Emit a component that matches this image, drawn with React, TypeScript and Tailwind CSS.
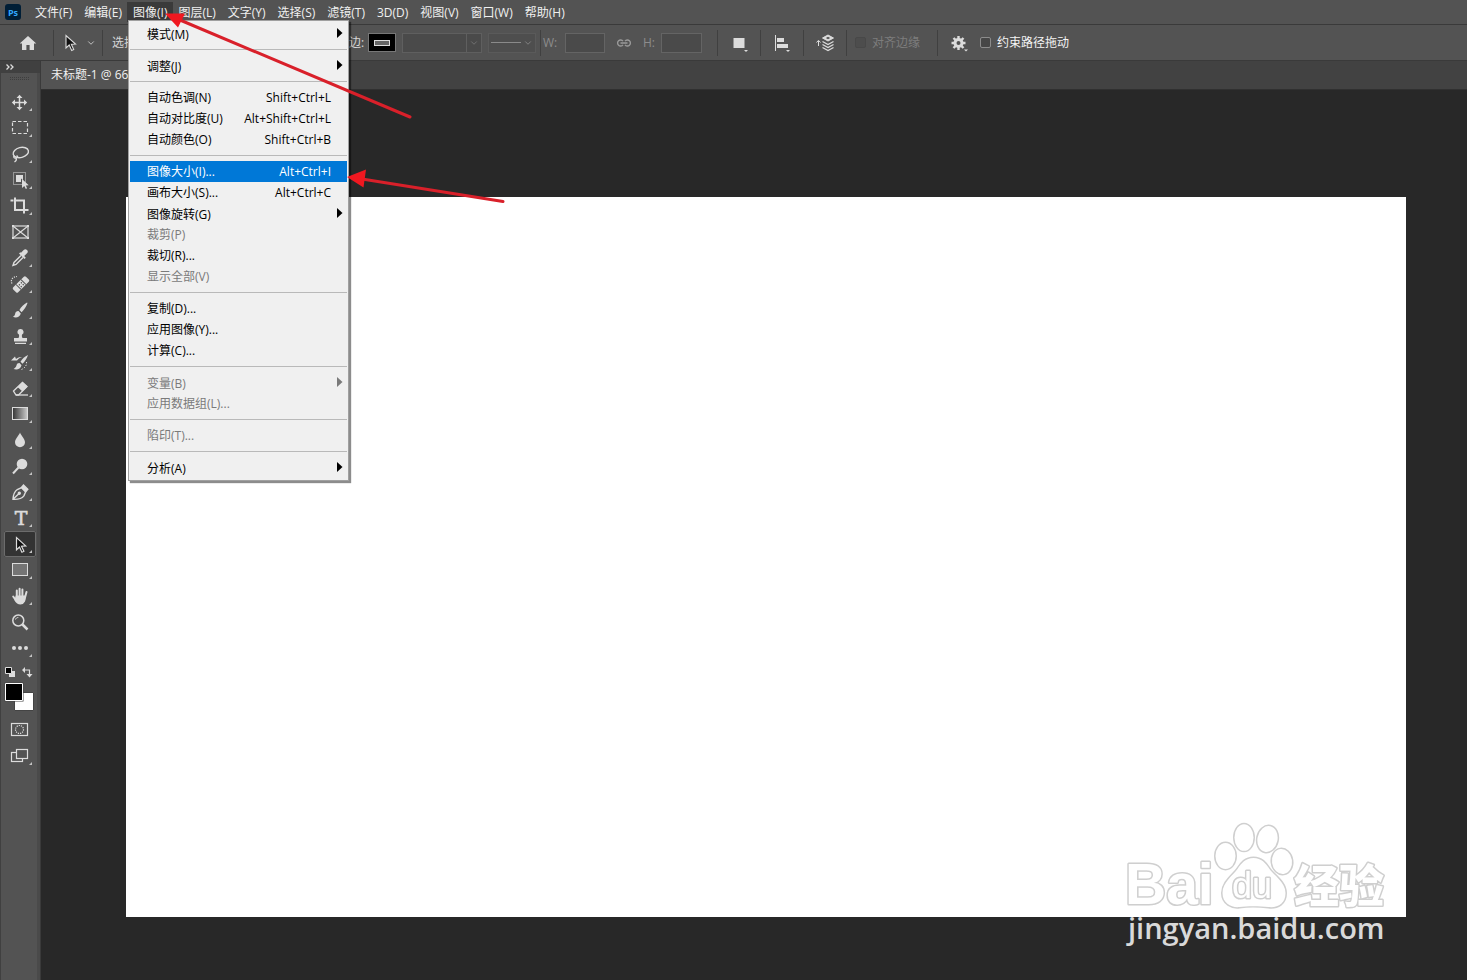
import React from "react";
import { ChevronDown } from "lucide-react";

type MenuEntry = { label: string; keys?: string; sub?: boolean; off?: boolean; active?: boolean };

const imageMenu: MenuEntry[][] = [
  [{ label: "模式(M)", sub: true }],
  [{ label: "调整(J)", sub: true }],
  [
    { label: "自动色调(N)", keys: "Shift+Ctrl+L" },
    { label: "自动对比度(U)", keys: "Alt+Shift+Ctrl+L" },
    { label: "自动颜色(O)", keys: "Shift+Ctrl+B" },
  ],
  [
    { label: "图像大小(I)...", keys: "Alt+Ctrl+I", active: true },
    { label: "画布大小(S)...", keys: "Alt+Ctrl+C" },
    { label: "图像旋转(G)", sub: true },
    { label: "裁剪(P)", off: true },
    { label: "裁切(R)..." },
    { label: "显示全部(V)", off: true },
  ],
  [{ label: "复制(D)..." }, { label: "应用图像(Y)..." }, { label: "计算(C)..." }],
  [
    { label: "变量(B)", sub: true, off: true },
    { label: "应用数据组(L)...", off: true },
  ],
  [{ label: "陷印(T)...", off: true }],
  [{ label: "分析(A)", sub: true }],
];

const menus = ["文件(F)", "编辑(E)", "图像(I)", "图层(L)", "文字(Y)", "选择(S)", "滤镜(T)", "3D(D)", "视图(V)", "窗口(W)", "帮助(H)"];

const C = "#dcdcdc";

function ImageMenu() {
  return (
    <div role="menu" className="absolute left-px top-[18px] z-20 w-[221px] border border-[#a0a0a0] bg-[#f0f0f0] px-px py-0.5 shadow-[2px_2px_1px_rgba(0,0,0,0.45)]">
      {imageMenu.map((group, g) => (
        <React.Fragment key={g}>
          {g > 0 && <div role="separator" className="my-[5px] h-px bg-[#b9b9b9]" />}
          {group.map((e) => (
            <button
              key={e.label}
              role="menuitem"
              disabled={e.off}
              className={
                "flex h-[21px] w-full items-center pl-[17px] text-left " +
                (e.sub ? "pr-1 pt-0.5 " : "pr-4 ") +
                (e.active ? "bg-[#0078d7] text-white" : e.off ? "text-[#7a7a7a]" : "text-black")
              }
            >
              <span className="flex-1">{e.label}</span>
              {e.keys && <span>{e.keys}</span>}
              {e.sub && (
                <svg width="6" height="10" viewBox="0 0 6 10" className="mb-1" fill="currentColor">
                  <path d="M0 0L5.5 5L0 10Z" />
                </svg>
              )}
            </button>
          ))}
        </React.Fragment>
      ))}
    </div>
  );
}

function MenuBar() {
  return (
    <nav className="flex h-[24px] items-center bg-[#535353] pl-[5px] text-[#f0f0f0]">
      <svg width="16" height="16" viewBox="0 0 16 16" className="mr-2 shrink-0">
        <rect width="16" height="16" rx="3" fill="#001e36" />
        <text x="8" y="11.5" textAnchor="middle" fontSize="9" fontWeight="700" fontFamily="Open Sans, sans-serif" fill="#31a8ff">Ps</text>
      </svg>
      {menus.map((m) => (
        <div key={m} className={"relative shrink-0 " + (m === "图像(I)" ? "-mr-px -ml-px" : "")}>
          <button className={"flex h-5 items-center px-1.5 pt-px whitespace-nowrap " + (m === "图像(I)" ? "bg-[#3a3a3a]" : "")}>{m}</button>
          {m === "图像(I)" && <ImageMenu />}
        </div>
      ))}
    </nav>
  );
}

const Sep = () => <div className="h-[26px] w-px shrink-0 bg-[#404040]" />;

function OptionsBar() {
  return (
    <div className="flex h-[37px] items-center border-y border-[#3a3a3a] bg-[#535353] text-[#d6d6d6]">
      <button aria-label="主页" className="flex w-[53px] shrink-0 justify-center pl-0.5">
        <svg width="18" height="16" viewBox="0 0 18 16" fill={C}>
          <path d="M9 1L.7 8.600H3V15h4.400v-5h3.200v5H15V8.600h2.300Z" />
        </svg>
      </button>
      <Sep />
      <button aria-label="路径选择工具" className="flex w-12 shrink-0 items-center gap-2 pl-[10px]">
        <svg width="14" height="18" viewBox="0 0 14 18">
          <path d="M2 1.500V14l3.200-3 2.500 5.500 2-1L7.300 10.300l4.200-.3Z" fill="#111" stroke={C} strokeWidth="1.100" />
        </svg>
        <ChevronDown size={10} />
      </button>
      <Sep />
      <span className="w-[234px] shrink-0 pl-[9px]">选择:</span>
      <span className="w-[31px] shrink-0 whitespace-nowrap">描边:</span>
      <button aria-label="描边颜色" className="flex h-[19px] w-7 shrink-0 items-center justify-center border border-[#777] bg-black">
        <span className="h-1.5 w-4 border border-[#ddd] bg-[#666]" />
      </button>
      <button aria-label="描边宽度" disabled className="ml-1.5 flex h-5 w-20 shrink-0 items-center border border-[#5f5f5f] bg-[#4a4a4a] text-[#777]">
        <span className="h-full flex-1 border-r border-[#5f5f5f]" />
        <ChevronDown size={10} className="mx-0.5" />
      </button>
      <button aria-label="描边类型" disabled className="ml-1.5 flex h-5 w-12 shrink-0 items-center justify-between border border-[#5a5a5a] bg-[#4e4e4e] px-0.5 text-[#8a8a8a]">
        <span className="h-px w-[30px] bg-[#8a8a8a]" />
        <ChevronDown size={10} />
      </button>
      <div className="ml-1"><Sep /></div>
      <label htmlFor="w" className="ml-0.5 w-[22px] shrink-0 text-[#8c8c8c]">W:</label>
      <input id="w" disabled className="h-5 w-10 shrink-0 border border-[#646464] bg-[#4a4a4a]" />
      <svg width="16" height="10" viewBox="0 0 16 10" className="ml-[11px] shrink-0" fill="none" stroke="#9a9a9a" strokeWidth="1.400">
        <path d="M7 3.200A3 3 0 1 0 7 6.800M9 3.200A3 3 0 1 1 9 6.800M4.500 5h7" />
      </svg>
      <label htmlFor="h" className="ml-[11px] w-[18px] shrink-0 text-[#8c8c8c]">H:</label>
      <input id="h" disabled className="h-5 w-[41px] shrink-0 border border-[#646464] bg-[#4a4a4a]" />
      <div className="ml-[15px]"><Sep /></div>
      <button aria-label="路径操作" className="flex w-[42px] shrink-0 justify-center">
        <svg width="18" height="20" viewBox="0 0 18 20" fill={C}>
          <path d="M3.500 5h11v10h-11ZM14 17h4l-2 2Z" />
        </svg>
      </button>
      <Sep />
      <button aria-label="路径对齐方式" className="flex w-[42px] shrink-0 justify-center">
        <svg width="18" height="20" viewBox="0 0 18 20" fill={C}>
          <path d="M2 2h1v16H2ZM4 5h7v4H4ZM4 11h11v4H4ZM13 17h4l-2 2Z" />
        </svg>
      </button>
      <Sep />
      <button aria-label="路径排列方式" className="flex w-[42px] shrink-0 justify-center">
        <svg width="20" height="20" viewBox="0 0 20 20" fill="none" stroke={C}>
          <path d="M3.500 13V8M1.500 9.500L3.500 7.300 5.500 9.500" />
          <path d="M13 2L7.500 5 13 8l5.500-3Z" fill={C} />
          <path d="M13 3.800L10.800 5 13 6.200 15.200 5Z" fill="#535353" stroke="none" />
          <path d="M7.500 8.500l5.500 3 5.500-3M7.500 11.500l5.500 3 5.500-3M7.500 14.500l5.500 3 5.500-3" strokeWidth="1.300" />
        </svg>
      </button>
      <Sep />
      <label className="flex w-[90px] shrink-0 items-center gap-1.5 pl-2 whitespace-nowrap text-[#7d7d7d]">
        <input type="checkbox" disabled className="size-[11px] appearance-none rounded-xs border border-[#484848] bg-[#4d4d4d]" />
        对齐边缘
      </label>
      <Sep />
      <button aria-label="路径选项" className="flex w-[42px] shrink-0 justify-center">
        <svg width="18" height="18" viewBox="0 0 18 18">
          <circle cx="8.500" cy="9" r="3.500" fill="none" stroke={C} strokeWidth="3" />
          <path d="M8.500 2v3M8.500 13v3M1.500 9h3M12.500 9h3M3.500 4l2.200 2.200M11.300 11.800L13.500 14M3.500 14l2.200-2.200M11.300 6.200L13.500 4" stroke={C} strokeWidth="2.400" />
          <path d="M14 15.500h4l-2 2Z" fill={C} />
        </svg>
      </button>
      <label className="flex shrink-0 items-center gap-1.5 whitespace-nowrap text-[#f4f4f4]">
        <input type="checkbox" className="size-[11px] appearance-none rounded-xs border border-[#8c8c8c] bg-[#474747]" />
        约束路径拖动
      </label>
    </div>
  );
}

/* Every tool glyph is drawn in a 32 by 26 box. */
const tools: { name: string; art: React.ReactNode; plain?: boolean; active?: boolean }[] = [
  { name: "移动工具", art: <g fill="none" stroke={C} strokeWidth="1.500"><path d="M15.500 8v12M9.500 13.500h12" /><path d="M15.500 5.800l3 3.200h-6ZM15.500 21.200l3-3.200h-6ZM7.800 13.500L11 10.500v6ZM23.200 13.500L20 10.500v6Z" fill={C} stroke="none" /></g> },
  { name: "矩形选框工具", art: <rect x="8.500" y="6.500" width="15" height="12" fill="none" stroke={C} strokeWidth="1.200" strokeDasharray="3.500 2" /> },
  { name: "套索工具", art: <g fill="none" stroke={C} strokeWidth="1.400"><ellipse cx="16.800" cy="11.500" rx="7.800" ry="5" transform="rotate(-14 16.800 11.500)" /><path d="M10.500 14.500c-1.500 1.500-.5 3 1.500 2.500s2-2 .5-2.300M12 17c1 1.500 0 3-1.500 4" /></g> },
  { name: "对象选择工具", art: <g><rect x="9.500" y="5.500" width="12" height="12" fill="none" stroke={C} strokeDasharray="1 1" /><path d="M12 8h7v5l-2-1.500V15h-5Z" fill={C} /><path d="M18 12v9l2.300-2 1.500 3 1.300-.7L21.800 18.500l2.900-.3Z" fill={C} /></g> },
  { name: "裁剪工具", art: <g fill="none" stroke={C} strokeWidth="2"><path d="M11 4.500V17h13.500M6.500 7.500h3M12 7.500h8v13" /></g> },
  { name: "图框工具", plain: true, art: <g fill="none" stroke={C} strokeWidth="1.200"><rect x="9" y="7" width="15" height="12" /><path d="M9 7l15 12M24 7L9 19" /><path d="M8 6h2v2H8zM23 6h2v2h-2zM8 18h2v2H8zM23 18h2v2h-2z" fill={C} stroke="none" /></g> },
  { name: "吸管工具", art: <g><path d="M17 10.500L10 17.500l-1 3 3-1 7-7" fill="none" stroke={C} strokeWidth="1.400" /><path d="M15 8.500l5.500 5.500 1.300-1.300-1.600-1.600 2.800-2.800a2.300 2.300 0 0 0-3.300-3.300L17 7.800 16.300 7.200Z" fill={C} /></g> },
  { name: "污点修复画笔工具", art: <g><g transform="rotate(-45 17 13.500)"><rect x="8" y="10" width="18" height="7" rx="1.500" fill={C} /><path d="M13.500 10v7M20.500 10v7" stroke="#535353" /><path d="M15 12h1.200v1.200H15zM17.800 12H19v1.200h-1.200zM15 14.600h1.200v1.200H15zM17.800 14.600H19v1.200h-1.200z" fill="#444" /></g><path d="M8 12.500c-2-3.500 1-7 5-7" fill="none" stroke={C} strokeWidth="1.200" strokeDasharray="1.200 1.200" /></g> },
  { name: "画笔工具", art: <path d="M23 5.500c-3 1.500-6 4.700-7.600 7.500l2.200 2.200C20 13 22.500 9.500 23.500 6ZM14.500 14c-1.700-.2-3 .8-3.300 2.500-.2 1.500-.8 2.500-2.200 3.200 2.500 1.500 6.800.8 7.800-3.200Z" fill={C} /> },
  { name: "仿制图章工具", art: <path d="M16.500 6a3 3 0 0 0-1.600 5.600c.4 1.200.3 2.400-.4 3.400H10v3.500h13V15h-4.500c-.7-1-.8-2.200-.4-3.400A3 3 0 0 0 16.500 6ZM11 19.700h11V21H11Z" fill={C} /> },
  { name: "历史记录画笔工具", art: <g><path d="M24 6c-3 1.200-6 4-7.500 6.800l2 2C20.800 12.500 23 9.500 24 6ZM15.500 14c-1.500-.2-2.600.6-2.900 2-.2 1.500-1 2.800-3 4 3 1.200 7 .3 7.900-3.700Z" fill={C} /><path d="M7 11.500l4-4 1 2.500c2-1.500 3.500-2 6-1.500-2 0-3.500 1-5 3Z" fill={C} /><path d="M22.500 13c.5 3-1.500 6-5 7.500" fill="none" stroke={C} strokeDasharray="1.300 1.500" /></g> },
  { name: "橡皮擦工具", art: <g><path d="M9.500 16L18.500 7.500 23 11.500 14.500 20h-2.500Z" fill="none" stroke={C} strokeWidth="1.300" /><path d="M13.500 12L18.500 7l5 4.500-5 5Z" fill={C} /><path d="M12 20h12" stroke={C} strokeWidth="1.300" /></g> },
  { name: "渐变工具", art: <g><defs><linearGradient id="ramp"><stop stopColor="#333" /><stop offset="1" stopColor="#ccc" /></linearGradient></defs><rect x="8.500" y="6.500" width="15" height="12" fill="url(#ramp)" stroke={C} /></g> },
  { name: "模糊工具", art: <path d="M16 5.500c1 3 5 6.200 5 9.800a5 5 0 0 1-10 0c0-3.600 4-6.800 5-9.800Z" fill={C} /> },
  { name: "减淡工具", art: <g><circle cx="18" cy="11" r="5.300" fill={C} /><path d="M14.500 14.500l-5.500 6" stroke={C} strokeWidth="2" /></g> },
  { name: "钢笔工具", art: <g fill="none" stroke={C} strokeWidth="1.400"><path d="M9 20.300c.2-4.300 1.500-7.800 4.300-9.800l4.200-2 4.200 4.200-1.800 4.200c-2 2.600-5.500 3.700-10.900 3.400ZM9 20.300l5.800-5.600" /><circle cx="15.300" cy="14.200" r="1" fill={C} /><path d="M17.500 8.500l2-2.500 4.300 4.300-2.100 2.400Z" fill={C} /></g> },
  { name: "横排文字工具", art: <text x="17" y="20" textAnchor="middle" fontFamily="DejaVu Serif, serif" fontSize="19" fill={C} stroke={C} strokeWidth=".6">T</text> },
  { name: "路径选择工具", active: true, art: <path d="M12.500 6.500v12.300l3-2.800 2.400 5.200 2-1-2.400-5 4.200-.3Z" fill="#111" stroke={C} strokeWidth="1.200" /> },
  { name: "矩形工具", art: <rect x="8.500" y="6.500" width="15" height="12" fill="#757575" stroke={C} /> },
  { name: "抓手工具", art: <g stroke={C} strokeLinecap="round" strokeWidth="2" fill="none"><path d="M12.800 14V7.500M15.600 13V5.800M18.400 13V6.500M21 14.500L22.500 9M12 17.500L9.200 13.500" /><path d="M12.500 13.500h8.300c.4 3-.8 7-4.300 7-2.500 0-4-1.500-5-3.500Z" fill={C} /></g> },
  { name: "缩放工具", plain: true, art: <g fill="none" stroke={C}><circle cx="14.300" cy="11.500" r="5.500" strokeWidth="1.500" /><path d="M11.500 10.500c.4-1.300 1.400-2 2.800-2" /><path d="M18.500 15.500l5 5" strokeWidth="2.500" /></g> },
  { name: "编辑工具栏", art: <g fill={C}><circle cx="10" cy="13" r="2" /><circle cx="16" cy="13" r="2" /><circle cx="22" cy="13" r="2" /></g> },
];

const Corner = () => <path d="M28 19v3h-3Z" fill="#c4c4c4" stroke="none" />;

function ToolPanel() {
  return (
    <aside className="flex w-[41px] shrink-0 flex-col border-r border-[#3a3a3a] bg-[#4a4a4a]">
      <div className="flex h-3 items-center bg-[#404040] pl-1.5">
        <svg width="8" height="6" viewBox="0 0 8 6" fill="none" stroke={C} strokeWidth="1.300">
          <path d="M.5 .5L3 3 .5 5.500M4.500 .5L7 3 4.500 5.500" />
        </svg>
      </div>
      <div className="mr-[3px] flex-1 border-l border-[#404040] bg-[#535353] pl-[3px]">
        <div className="flex h-4 items-start pl-1.5 pt-1">
          <svg width="20" height="4" viewBox="0 0 20 4">
            <path d="M0 .5h20M0 2.500h20" stroke="#3e3e3e" strokeDasharray="1 1" />
          </svg>
        </div>
        {tools.map((t) => (
          <button
            key={t.name}
            aria-label={t.name}
            className={"flex h-[26px] w-8 " + (t.active ? "rounded-xs bg-[#333] outline-1 -outline-offset-1 outline-[#6c6c6c]" : "")}
          >
            <svg width="32" height="26" viewBox="0 0 32 26">
              {t.art}
              {!t.plain && <Corner />}
            </svg>
          </button>
        ))}
        <div className="mt-1.5 flex justify-between pl-px pr-1">
          <button aria-label="默认前景色和背景色">
            <svg width="11" height="11" viewBox="0 0 11 11"><path d="M4 4h6v6H4Z" fill={C} /><path d="M.5 .5h6v6h-6Z" fill="#000" stroke={C} /></svg>
          </button>
          <button aria-label="切换前景色和背景色">
            <svg width="11" height="11" viewBox="0 0 11 11"><path d="M2 3h5.500v5" fill="none" stroke={C} strokeWidth="1.200" /><path d="M0 3l3-3v6ZM4.500 7h6l-3 3.500Z" fill={C} /></svg>
          </button>
        </div>
        <button aria-label="前景色和背景色" className="mt-1 block">
          <svg width="32" height="32" viewBox="0 0 32 32">
            <path d="M10.500 10.500h19v18h-19Z" fill="#fff" stroke="#444" />
            <path d="M.5 .5h19v19H.500Z" fill="#444" />
            <path d="M1.500 1.500h17v17h-17Z" fill="#000" stroke="#fff" />
          </svg>
        </button>
        <button aria-label="以快速蒙版模式编辑" className="mt-[3px] block">
          <svg width="32" height="26" viewBox="0 0 32 26" fill="none" stroke={C} strokeWidth="1.200">
            <rect x="7.500" y="6.500" width="16" height="12" /><circle cx="15.500" cy="12.500" r="4" strokeDasharray="1.200 1" />
          </svg>
        </button>
        <button aria-label="更改屏幕模式" className="block">
          <svg width="32" height="26" viewBox="0 0 32 26" fill="none" stroke={C} strokeWidth="1.200">
            <rect x="7.500" y="9.500" width="11" height="9" /><rect x="12.500" y="6.500" width="11" height="9" fill="#535353" /><Corner />
          </svg>
        </button>
      </div>
    </aside>
  );
}

function Watermark() {
  return (
    <svg width="280" height="140" viewBox="0 0 280 140" className="absolute right-[5px] -bottom-[37px]">
      <defs>
        <filter id="soft" x="-10%" y="-10%" width="120%" height="120%"><feGaussianBlur stdDeviation="0.600" /></filter>
      </defs>
      <g fill="#fff" stroke="#cfcfcf" strokeWidth="3" filter="url(#soft)" paintOrder="stroke" strokeLinejoin="round">
        <ellipse cx="104.500" cy="42" rx="10" ry="13" />
        <ellipse cx="123" cy="23.500" rx="9.500" ry="13.300" />
        <ellipse cx="146.500" cy="25" rx="10" ry="13" transform="rotate(12 146.500 25)" />
        <ellipse cx="161" cy="47.500" rx="10" ry="12.500" transform="rotate(-8 161 47.500)" />
        <path d="M132.500 44c8 0 12 5 16 11s16 13 16 24-8 15-17 14-22-1-29 0-17-3-17-14 11-18 15-24 8-11 16-11Z" />
        <text x="4" y="90" fontFamily="Liberation Sans, sans-serif" fontWeight="700" fontSize="57">Bai</text>
        <text x="173" y="89" fontFamily="Noto Sans CJK SC, sans-serif" fontWeight="900" fontSize="45">经验</text>
        <text x="111" y="84" fontFamily="Liberation Sans, sans-serif" fontSize="36">du</text>
      </g>
      <text x="7" y="125" fontFamily="Open Sans, sans-serif" fontWeight="600" fontSize="29" fill="#d9d9d9">jingyan.baidu.com</text>
    </svg>
  );
}

function Arrows() {
  return (
    <svg width="520" height="220" viewBox="0 0 520 220" className="pointer-events-none absolute left-0 top-0 z-30">
      <g stroke="#d9202a" strokeWidth="3" strokeLinecap="round">
        <path d="M180 20L410 117M362 179L503 201.500" />
      </g>
      <path d="M165 13.500L185 13.500 178 27.500ZM347 177L366 169.500 363.500 187.500Z" fill="#f01820" />
    </svg>
  );
}

export default function App() {
  return (
    <div className="relative flex min-h-screen flex-col overflow-hidden bg-[#282828] font-['Open_Sans','Noto_Sans_CJK_SC',sans-serif] text-[12px] leading-4">
      <MenuBar />
      <OptionsBar />
      <div className="flex flex-1">
        <ToolPanel />
        <main className="flex min-w-0 flex-1 flex-col">
          <div role="tablist" className="flex h-[29px] border-b border-[#303030] bg-[#424242]">
            <button role="tab" className="w-[300px] bg-[#535353] pl-[10px] text-left text-[#f0f0f0]">未标题-1 @ 66</button>
          </div>
          <div className="flex flex-1 pt-[107px] pr-[61px] pb-[63px] pl-[85px]">
            <div className="relative flex-1 bg-white">
              <Watermark />
            </div>
          </div>
        </main>
      </div>
      <Arrows />
    </div>
  );
}
